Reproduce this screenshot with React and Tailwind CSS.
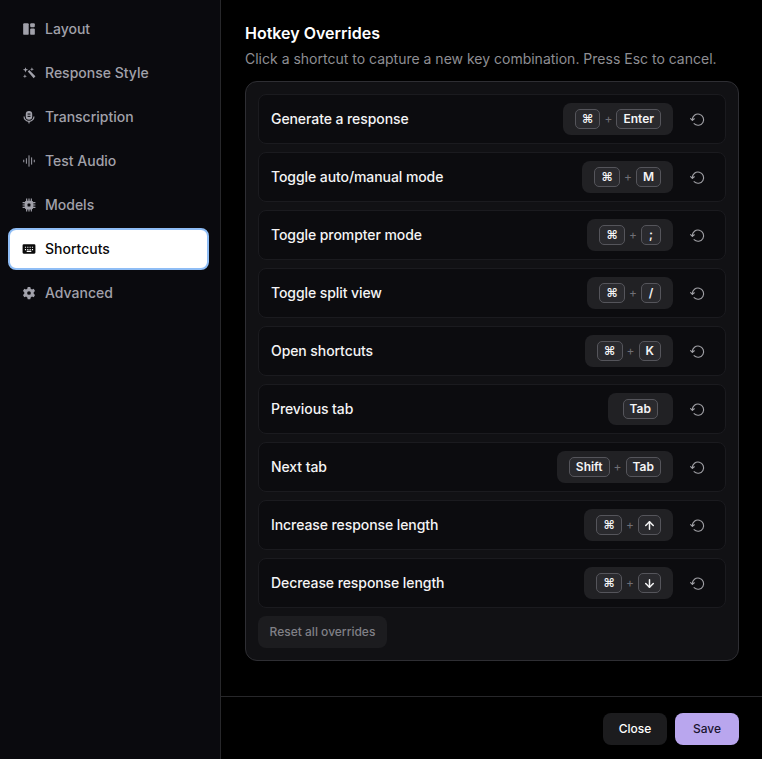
import React from 'react';
import { ArrowUp, ArrowDown } from 'lucide-react';

const navItems = [
  { label: 'Layout', icon: 'layout' },
  { label: 'Response Style', icon: 'wand' },
  { label: 'Transcription', icon: 'mic' },
  { label: 'Test Audio', icon: 'wave' },
  { label: 'Models', icon: 'cpu' },
  { label: 'Shortcuts', icon: 'keyboard', active: true },
  { label: 'Advanced', icon: 'gear' },
];

const hotkeys = [
  { label: 'Generate a response', keys: ['⌘', 'Enter'] },
  { label: 'Toggle auto/manual mode', keys: ['⌘', 'M'] },
  { label: 'Toggle prompter mode', keys: ['⌘', ';'] },
  { label: 'Toggle split view', keys: ['⌘', '/'] },
  { label: 'Open shortcuts', keys: ['⌘', 'K'] },
  { label: 'Previous tab', keys: ['Tab'] },
  { label: 'Next tab', keys: ['Shift', 'Tab'] },
  { label: 'Increase response length', keys: ['⌘', 'up'] },
  { label: 'Decrease response length', keys: ['⌘', 'down'] },
];

function NavIcon({ name }) {
  const common = { width: 14, height: 14, viewBox: '0 0 24 24', fill: 'currentColor', className: 'shrink-0' };
  if (name === 'layout') {
    return (
      <svg {...common}>
        <rect x="2" y="2" width="9.500" height="20" rx="2" />
        <rect x="14" y="2" width="8" height="7" rx="2" />
        <rect x="14" y="11" width="8" height="11" rx="2" />
      </svg>
    );
  }
  if (name === 'wand') {
    return (
      <svg {...common}>
        <path d="M10 9.500L12.500 7 23 17.500 20 21z" />
        <path d="M6 2l1.200 3.300L10.500 6.500 7.200 7.700 6 11 4.800 7.700 1.500 6.500 4.800 5.300z" />
        <path d="M17 2l.9 2.600 2.600.9-2.600.9L17 9l-.9-2.600-2.600-.9 2.600-.9z" />
        <path d="M5 14l.9 2.600 2.600.9-2.600.9L5 21l-.9-2.600-2.600-.9 2.600-.9z" />
      </svg>
    );
  }
  if (name === 'mic') {
    return (
      <svg {...common}>
        <rect x="6.500" y="1.500" width="11" height="15" rx="5.500" />
        <rect x="9.500" y="6" width="5" height="1.800" fill="#0a0a0e" />
        <rect x="9.500" y="10" width="5" height="1.800" fill="#0a0a0e" />
        <path d="M3.500 11a8.500 8.500 0 0 0 17 0" fill="none" stroke="currentColor" strokeWidth="2" />
        <rect x="11" y="19" width="2" height="4" />
      </svg>
    );
  }
  if (name === 'wave') {
    return (
      <svg {...common} fill="none" stroke="currentColor" strokeWidth="1.700" strokeLinecap="round">
        <path d="M3 10.500v3M7.500 8v8M12 3v18M16.500 6.500v11M21 10.500v3" />
      </svg>
    );
  }
  if (name === 'cpu') {
    return (
      <svg {...common}>
        <rect x="4.500" y="4.500" width="15" height="15" rx="3.500" />
        <rect x="9.500" y="9.500" width="5" height="5" rx="1" fill="#0a0a0e" />
        <path
          d="M8 1v4M12 1v4M16 1v4M8 19v4M12 19v4M16 19v4M1 8h4M1 12h4M1 16h4M19 8h4M19 12h4M19 16h4"
          stroke="currentColor"
          strokeWidth="2"
        />
      </svg>
    );
  }
  if (name === 'keyboard') {
    return (
      <svg {...common}>
        <path
          fillRule="evenodd"
          d="M3 4h18a2 2 0 0 1 2 2v12a2 2 0 0 1-2 2H3a2 2 0 0 1-2-2V6a2 2 0 0 1 2-2zm2 4v2h2V8zm4 0v2h2V8zm4 0v2h2V8zm4 0v2h2V8zM5 12v2h2v-2zm12 0v2h2v-2zM8 15v2h8v-2zm1-3v2h2v-2zm4 0v2h2v-2z"
        />
      </svg>
    );
  }
  return (
    <svg {...common}>
      <path
        fillRule="evenodd"
        d="M9.800 1.500h4.400l.7 3 2.200 1.300 3-.9 2.200 3.800-2.200 2.100v2.400l2.200 2.100-2.200 3.800-3-.9-2.200 1.300-.7 3H9.800l-.7-3-2.200-1.300-3 .9L1.700 15.300l2.200-2.100v-2.400L1.700 8.700l2.200-3.800 3 .9 2.200-1.300zM12 8.800a3.200 3.200 0 1 0 0 6.400 3.200 3.200 0 0 0 0-6.400z"
      />
    </svg>
  );
}

function ResetIcon() {
  return (
    <svg
      width="15"
      height="15"
      viewBox="0 0 24 24"
      fill="none"
      stroke="currentColor"
      strokeWidth="1.800"
      strokeLinecap="round"
      strokeLinejoin="round"
      className="text-[#a1a1a6]"
    >
      <path d="M3.800 12.500a9 9 0 1 1 2.700 6.200" />
      <path d="M1 10.500l2.800 3 3-2.700" />
    </svg>
  );
}

function Key({ value }) {
  const isArrow = value === 'up' || value === 'down';
  return (
    <span
      className={
        isArrow
          ? 'flex h-5 items-center justify-center rounded-[5px] border border-[#55555b] bg-[#2a2a2e] px-[4px] text-[#f4f4f5]'
          : 'flex h-5 min-w-[20px] items-center justify-center rounded-[5px] border border-[#55555b] bg-[#2a2a2e] px-1.5 text-xs font-semibold leading-none text-[#f4f4f5]'
      }
    >
      {value === 'up' && <ArrowUp size={13} strokeWidth={2.75} />}
      {value === 'down' && <ArrowDown size={13} strokeWidth={2.75} />}
      {!isArrow && value}
    </span>
  );
}

function HotkeyRow({ label, keys }) {
  return (
    <div className="flex h-[50px] items-center justify-between rounded-lg border border-[#1b1b1f] bg-[#0c0c0f] pl-3 pr-5">
      <span className="text-sm font-medium tracking-[-0.08px] text-[#f4f4f5]">{label}</span>
      <div className="flex items-center gap-[17px]">
        <div
          className={
            keys.length === 1
              ? 'flex h-8 items-center gap-1 rounded-lg bg-[#212124] px-[15px]'
              : 'flex h-8 items-center gap-1 rounded-lg bg-[#212124] px-3'
          }
        >
          {keys.map((k, i) => (
            <React.Fragment key={k}>
              {i > 0 && <span className="w-2 text-center text-xs text-[#6f6f75]">+</span>}
              <Key value={k} />
            </React.Fragment>
          ))}
        </div>
        <ResetIcon />
      </div>
    </div>
  );
}

export default function App() {
  return (
    <div className="flex h-[759px] w-[762px] overflow-hidden bg-black font-['Inter',sans-serif] text-white">
      <aside className="flex w-[221px] shrink-0 flex-col border-r border-[#27272a] bg-[#0a0a0e] pl-2 pr-[11px] pt-[7px]">
        {navItems.map((item) => (
          <div
            key={item.label}
            className={
              item.active
                ? 'my-px flex h-[42px] items-center gap-[9px] rounded-lg border-2 border-[#8fbdf5] bg-white pl-3 text-sm font-medium text-[#0a0a0a]'
                : 'flex h-11 items-center gap-[9px] pl-[14px] text-sm font-medium text-[#a1a1aa]'
            }
          >
            <NavIcon name={item.icon} />
            <span>{item.label}</span>
          </div>
        ))}
      </aside>

      <main className="flex min-w-0 flex-1 flex-col">
        <div className="flex-1 pl-6 pr-[23px] pt-[23px]">
          <h2 className="text-base font-semibold leading-5 text-white">Hotkey Overrides</h2>
          <p className="mt-[6px] text-sm leading-5 text-[#8e8e93]">
            Click a shortcut to capture a new key combination. Press Esc to cancel.
          </p>
          <div className="mt-3 flex flex-col gap-2 rounded-xl border border-[#2e2e33] bg-[#111114] p-3">
            {hotkeys.map((row) => (
              <HotkeyRow key={row.label} label={row.label} keys={row.keys} />
            ))}
            <button className="h-8 w-[129px] rounded-lg bg-[#1c1c1f] text-xs font-medium text-[#808086]">
              Reset all overrides
            </button>
          </div>
        </div>
        <footer className="flex h-[63px] items-start justify-end gap-2 border-t border-[#27272a] px-[23px] pt-4">
          <button className="h-8 w-16 rounded-lg bg-[#1c1c1e] text-xs font-medium text-white">Close</button>
          <button className="h-8 w-16 rounded-lg bg-[#b9a6ee] text-xs font-medium text-[#1a1430]">Save</button>
        </footer>
      </main>
    </div>
  );
}
